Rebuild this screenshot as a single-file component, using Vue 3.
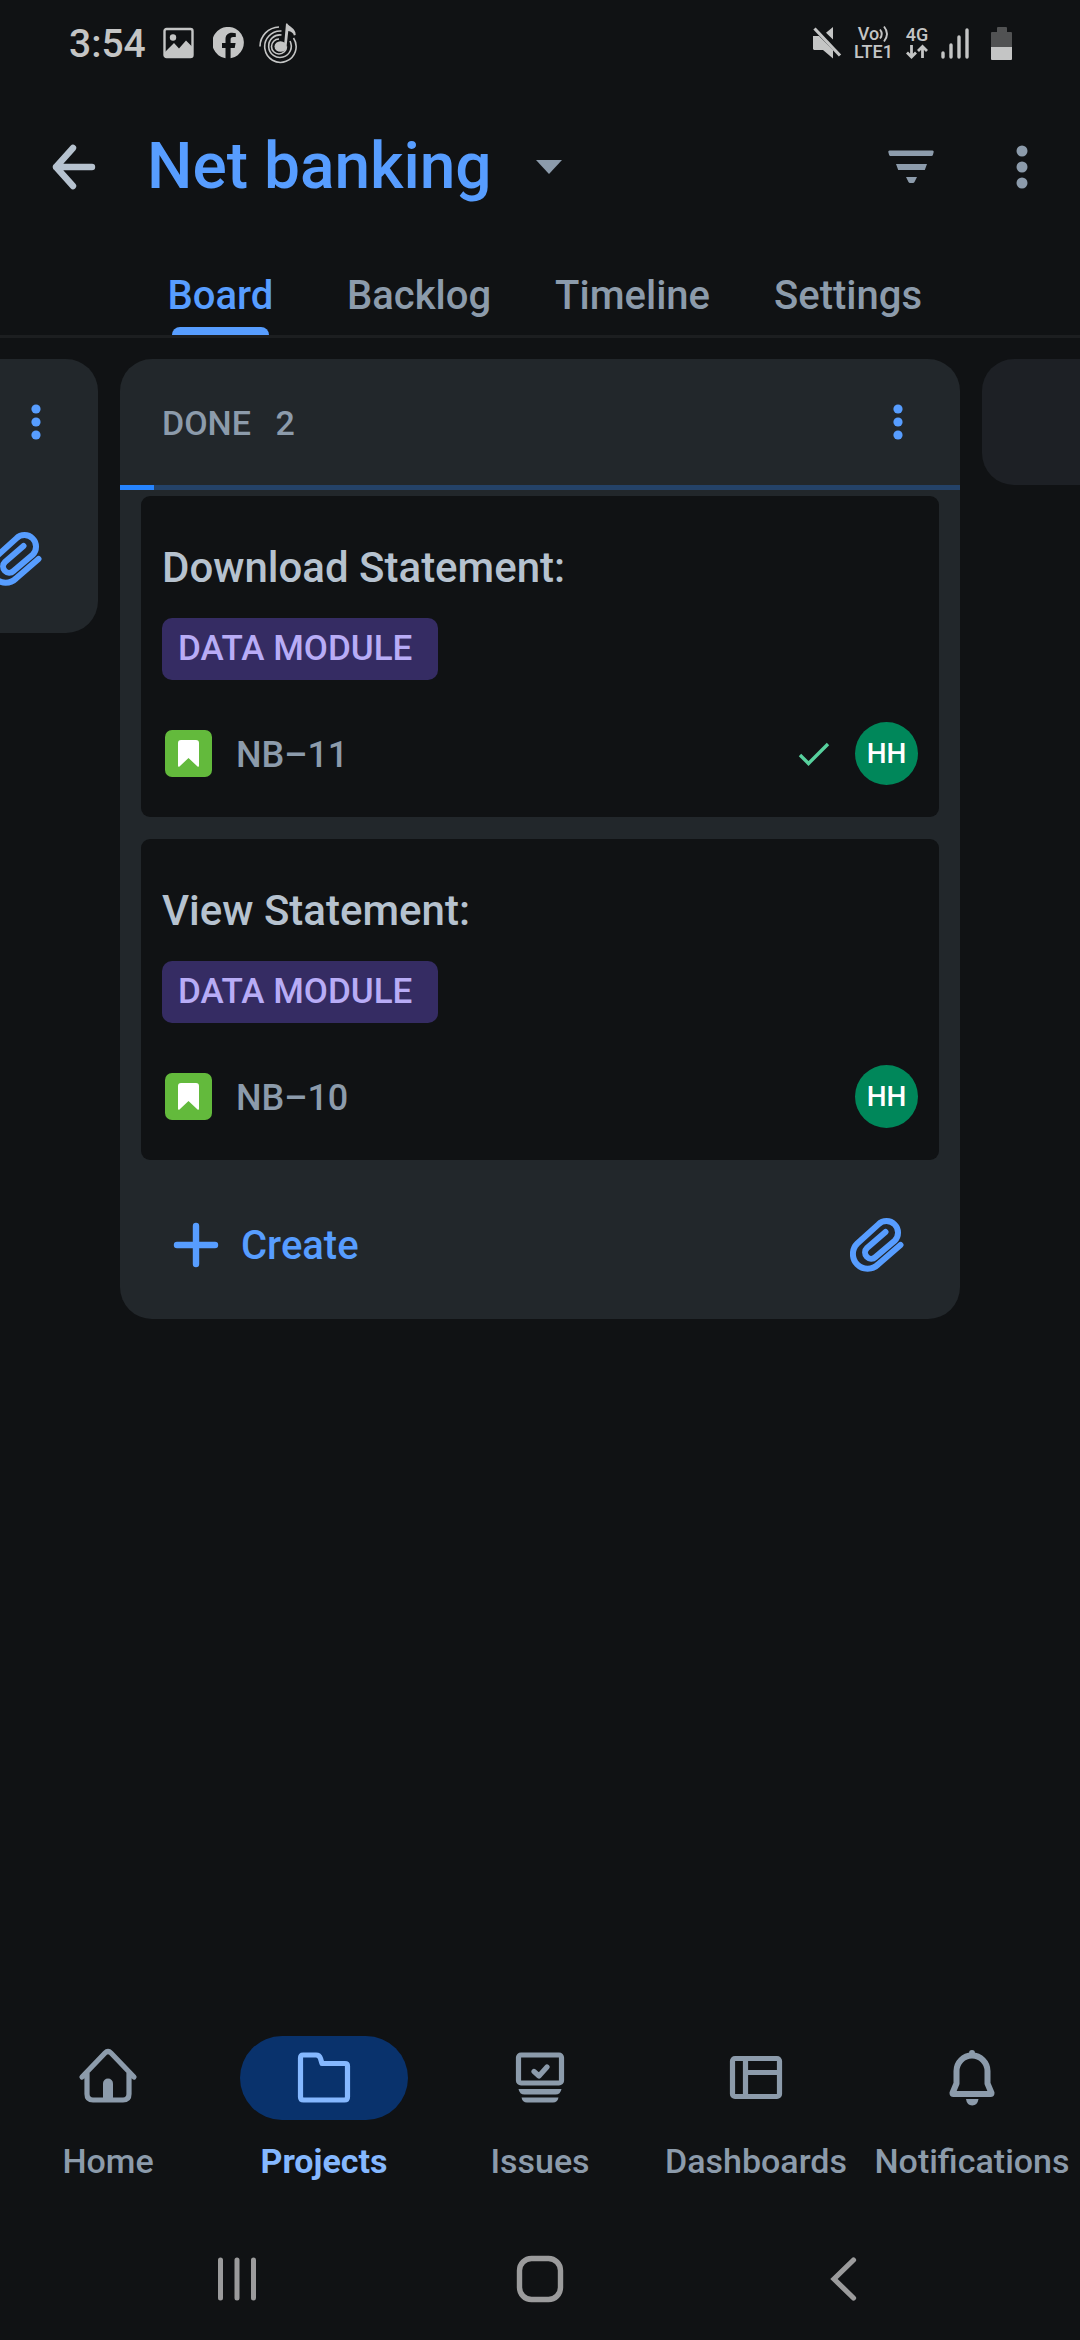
<script setup>
import { ref } from 'vue'

const tabs = ['Board', 'Backlog', 'Timeline', 'Settings']
const activeTab = ref('Board')

const issues = [
  { title: 'Download Statement:', epic: 'DATA MODULE', key: 'NB–11', done: true, assignee: 'HH' },
  { title: 'View Statement:', epic: 'DATA MODULE', key: 'NB–10', done: false, assignee: 'HH' },
]

const destinations = ['Home', 'Projects', 'Issues', 'Dashboards', 'Notifications']
const activeDestination = ref('Projects')
</script>

<template>
  <div class="screen">
    <div class="status-bar">
      <div class="status-group">
        <span class="clock">3:54</span>
        <svg width="32" height="32" viewBox="0 0 32 32" aria-hidden="true">
          <rect x="1.5" y="2" width="28" height="28" rx="2" fill="none" stroke="#c4c5c5" stroke-width="2.4" />
          <circle cx="10" cy="10.500" r="3.200" fill="#c4c5c5" />
          <path d="M2 25l9-9 5 5.500 7-8 7 7V29H2z" fill="#c4c5c5" />
        </svg>
        <svg class="gap-wide" width="32" height="32" viewBox="0 0 32 32" aria-hidden="true">
          <path d="M12.500 31.300V21H9v-5h3.500v-3.500c0-4.500 2.500-6.700 6.500-6.700 1.500 0 2.800.200 3.800.400V10h-2.600c-2 0-2.600 1.100-2.600 2.700V16h5l-.9 5h-4.100v10.300A15.800 15.800 0 1 0 12.500 31.300z" fill="#c4c5c5" />
        </svg>
        <svg class="gap-disc" width="38" height="42" viewBox="0 0 38 42" aria-hidden="true">
          <g fill="none" stroke="#c4c5c5" stroke-width="1.600">
            <path d="M1 24.500A19.500 19.500 0 0 1 20 5" />
            <path d="M22.500 9A15.700 15.700 0 1 0 34.500 16" />
            <path d="M22.500 13A11.300 11.300 0 1 0 31 19" />
            <path d="M20 17A7.500 7.500 0 1 0 27.500 24.500" />
          </g>
          <ellipse cx="21.500" cy="24.500" rx="6" ry="5.300" fill="#c4c5c5" />
          <path d="M28.300 1.500c1 3 8.700 4.500 8.400 11.500l-1.800.5c-.4-2.500-2.900-4-5.600-4.400L27.500 25l-2.500-1 2-22.500z" fill="#c4c5c5" />
        </svg>
      </div>
      <div class="status-group status-right">
        <svg width="30" height="34" viewBox="0 0 30 34" aria-hidden="true">
          <path d="M21 1v12.500L14 6.700zM1 10h6l14 14v8.500L11 24H2l-1-1z" fill="#c4c5c5" />
          <path d="M2.500 2.500l25.500 27" stroke="#c4c5c5" stroke-width="3.200" />
        </svg>
        <div class="network">
          <span class="volte">Vo<svg width="10" height="18" viewBox="0 0 10 18" aria-hidden="true">
            <path d="M1 4.500q3.500 4.500 0 9M5 1.500q6 7.500 0 15" fill="none" stroke="#c4c5c5" stroke-width="1.900" />
          </svg></span>
          <span>LTE1</span>
        </div>
        <div class="network">
          <span>4G</span>
          <svg width="24" height="16" viewBox="0 0 24 16" aria-hidden="true">
            <path d="M6.500 1v12M2 8.500l4.500 4.500L11 8.500M17.500 14V2M13 7l4.500-4.500L22 7" fill="none" stroke="#c4c5c5" stroke-width="2.800" />
          </svg>
        </div>
        <svg width="28" height="34" viewBox="0 0 28 34" aria-hidden="true">
          <path d="M2 27v4M10 19v12M18 11v20M26 4v27" stroke="#c4c5c5" stroke-width="3.400" stroke-linecap="round" />
        </svg>
        <svg class="gap-battery" width="22" height="34" viewBox="0 0 22 34" aria-hidden="true">
          <path d="M6 6V2q0-1 1-1h8q1 0 1 1v4h4q1 0 1 1v14H0V7q0-1 1-1z" fill="#515253" />
          <path d="M0 21h21v12q0 1-1 1H1q-1 0-1-1z" fill="#c4c5c5" />
        </svg>
      </div>
    </div>

    <header class="app-bar">
      <button class="icon-button" aria-label="Back">
        <svg width="46" height="48" viewBox="0 0 46 48">
          <path d="M22 5L5 24l17 19M5 24h36" fill="none" stroke="#b6c2cf" stroke-width="6.400" stroke-linecap="round" stroke-linejoin="round" />
        </svg>
      </button>
      <h1>
        <button class="project-switch">
          Net banking
          <svg width="26" height="14" viewBox="0 0 26 14" aria-hidden="true"><path d="M0 0h26L13 14z" fill="#8c9bab" /></svg>
        </button>
      </h1>
      <button class="icon-button" aria-label="Filter">
        <svg width="46" height="34" viewBox="0 0 46 34">
          <path d="M1.500.500h43q1.500 0 1.200 1.500l-.8 3q-.4 1-1.400 1h-41Q1.500 6 1.100 5L.3 2Q0 .500 1.500.500zM8 14h31l-2.200 6H10.200zM18 27h11l-2.500 5q-.5 1-1.500 1h-3q-1 0-1.500-1z" fill="#8c9bab" />
        </svg>
      </button>
      <button class="icon-button" aria-label="More options">
        <svg width="12" height="46" viewBox="0 0 12 46" fill="#8c9bab">
          <circle cx="6" cy="7" r="5.500" /><circle cx="6" cy="23" r="5.500" /><circle cx="6" cy="39" r="5.500" />
        </svg>
      </button>
    </header>

    <nav class="tabs" aria-label="Project views">
      <button v-for="tab in tabs" :key="tab" class="tab" :class="{ active: tab === activeTab }" @click="activeTab = tab">
        <span>{{ tab }}</span>
      </button>
    </nav>

    <main class="board">
      <section class="column">
        <div class="column-head">
          <button class="icon-button column-menu" aria-label="Column options">
            <svg width="10" height="36" viewBox="0 0 10 36" fill="#579dff">
              <circle cx="5" cy="5" r="4.600" /><circle cx="5" cy="18" r="4.600" /><circle cx="5" cy="31" r="4.600" />
            </svg>
          </button>
        </div>
        <div class="column-foot">
          <button class="icon-button attach" aria-label="Attach">
            <svg width="54" height="54" viewBox="10 10 54 54">
              <path d="M60.500 37L38 56.500A14.500 14.500 0 0 1 17.300 35.500L38.400 16.400A11.500 11.500 0 0 1 54.600 32.800L35.500 49A6 6 0 0 1 27 40L45.500 24" fill="none" stroke="#579dff" stroke-width="6" stroke-linecap="round" />
            </svg>
          </button>
        </div>
      </section>

      <section class="column">
        <div class="column-head">
          <h2>DONE <span>2</span></h2>
          <button class="icon-button column-menu" aria-label="Column options">
            <svg width="10" height="36" viewBox="0 0 10 36" fill="#579dff">
              <circle cx="5" cy="5" r="4.600" /><circle cx="5" cy="18" r="4.600" /><circle cx="5" cy="31" r="4.600" />
            </svg>
          </button>
        </div>
        <div class="loading"><div class="loading-value"></div></div>
        <div class="cards">
          <article v-for="issue in issues" :key="issue.key" class="card">
            <h3>{{ issue.title }}</h3>
            <span class="epic">{{ issue.epic }}</span>
            <div class="card-foot">
              <svg class="story" width="47" height="47" viewBox="0 0 47 47" aria-hidden="true">
                <rect width="47" height="47" rx="7" fill="#63ba3c" />
                <path d="M16 10h15q3 0 3 3v22.500q0 2-1.500 1L23.500 28l-9 8.500Q13 37.500 13 35.500V13q0-3 3-3z" fill="#fff" />
              </svg>
              <span class="key">{{ issue.key }}</span>
              <svg v-if="issue.done" class="check" width="32" height="24" viewBox="0 0 32 24" aria-label="Done">
                <path d="M2 13l8.500 8.500L30 2" fill="none" stroke="#57d09d" stroke-width="3.400" />
              </svg>
              <span class="avatar">{{ issue.assignee }}</span>
            </div>
          </article>
        </div>
        <div class="column-foot">
          <button class="create">
            <svg width="46" height="46" viewBox="0 0 46 46" aria-hidden="true">
              <path d="M23 4v38M4 23h38" stroke="#579dff" stroke-width="6.400" stroke-linecap="round" />
            </svg>
            <span>Create</span>
          </button>
          <button class="icon-button attach" aria-label="Attach">
            <svg width="54" height="54" viewBox="10 10 54 54">
              <path d="M60.500 37L38 56.500A14.500 14.500 0 0 1 17.300 35.500L38.400 16.400A11.500 11.500 0 0 1 54.600 32.800L35.500 49A6 6 0 0 1 27 40L45.500 24" fill="none" stroke="#579dff" stroke-width="6" stroke-linecap="round" />
            </svg>
          </button>
        </div>
      </section>

      <section class="column column-next"></section>
    </main>

    <nav class="bottom-nav" aria-label="Main">
      <a v-for="name in destinations" :key="name" href="#" class="destination" :class="{ active: name === activeDestination }" @click.prevent="activeDestination = name">
        <span class="pill">
          <svg width="64" height="64" viewBox="0 0 64 64" fill="none" stroke="currentColor" stroke-width="5.200" stroke-linecap="round" stroke-linejoin="round" aria-hidden="true">
            <template v-if="name === 'Home'">
              <path d="M6 31L29 7q3-3 6 0l23 24M11 27v21q0 6 6 6h30q6 0 6-6V27" />
              <path d="M27 53V37.500a5 5 0 0 1 10 0V53z" fill="currentColor" stroke="none" />
            </template>
            <path v-else-if="name === 'Projects'" d="M11 9h13q3.500 0 4.500 3.500l1.500 5h23q2.500 0 2.500 2.500v31q0 3-3 3h-41q-3 0-3-3V12q0-3 2.500-3z" />
            <template v-else-if="name === 'Issues'">
              <rect x="10.500" y="9" width="43" height="28" rx="2.500" />
              <path d="M26 25.500l5 4.500 8-9" />
              <path d="M10.500 43h43q-1 5.500-6 5.500h-31q-5 0-6-5.500zM13.500 51.500h37q-1 5-5.500 5H19q-4.500 0-5.500-5z" fill="currentColor" stroke="none" />
            </template>
            <template v-else-if="name === 'Dashboards'">
              <rect x="8.500" y="12.500" width="47" height="38" rx="2.500" />
              <path d="M21.500 13v37M22 26.500h33" />
            </template>
            <template v-else>
              <path d="M12.500 47l4-9.500V25a15.500 15.500 0 0 1 31 0v12.500l4 9.500q0 1-1 1h-37q-1 0-1-1zM32 7v2" stroke-width="6" />
              <path d="M26 53h12.500q-1 6.500-6.300 6.500T26 53z" fill="currentColor" stroke="none" />
            </template>
          </svg>
        </span>
        {{ name }}
      </a>
    </nav>

    <div class="system-nav">
      <button class="icon-button" aria-label="Recents">
        <svg width="44" height="50" viewBox="0 0 44 50"><path d="M5.500 6v38M22 6v38M38.500 6v38" stroke="#9b9b9c" stroke-width="5" stroke-linecap="round" /></svg>
      </button>
      <button class="icon-button" aria-label="Home screen">
        <svg width="50" height="50" viewBox="0 0 50 50"><rect x="4.500" y="4.500" width="41" height="41" rx="12" fill="none" stroke="#9b9b9c" stroke-width="5.400" /></svg>
      </button>
      <button class="icon-button" aria-label="System back">
        <svg width="30" height="50" viewBox="0 0 30 50"><path d="M25.500 6L6 25l19.500 19" fill="none" stroke="#9b9b9c" stroke-width="5.200" stroke-linecap="round" /></svg>
      </button>
    </div>
  </div>
</template>

<style>
body {
  margin: 0;
  background: #101214;
}
</style>

<style scoped>
.screen {
  box-sizing: border-box;
  min-height: 100vh;
  display: flex;
  flex-direction: column;
  overflow: hidden;
  background: #101214;
  color: #8c9bab;
  font-family: Roboto, "Noto Sans", sans-serif;
  font-weight: 500;
}

svg {
  display: block;
  flex: none;
}

button {
  padding: 0;
  border: 0;
  background: none;
  color: inherit;
  font: inherit;
  cursor: pointer;
}

h1,
h2,
h3 {
  margin: 0;
  font-weight: 500;
}

.icon-button {
  display: flex;
  align-items: center;
  justify-content: center;
}

/* Status bar */
.status-bar {
  display: flex;
  justify-content: space-between;
  align-items: center;
  height: 86px;
  padding: 0 67px 0 69px;
  color: #c4c5c5;
}

.status-group {
  display: flex;
  align-items: center;
}

.clock {
  margin-right: 17px;
  padding-top: 2px;
  font-size: 39px;
  line-height: 48px;
}

.gap-wide {
  margin-left: 18px;
}

.gap-disc {
  margin-left: 14px;
}

.status-right {
  gap: 12px;
}

.gap-battery {
  margin-left: 10px;
}

.network {
  display: flex;
  flex-direction: column;
  align-items: center;
  font-size: 18px;
  line-height: 18px;
}

.volte {
  display: flex;
  align-items: center;
}

/* App bar */
.app-bar {
  display: flex;
  align-items: center;
  height: 162px;
  padding: 0 52px 0 51px;
}

.app-bar h1 {
  flex: 1;
  margin-left: 50px;
}

.app-bar .icon-button + .icon-button {
  margin-left: 82px;
}

.project-switch {
  display: flex;
  align-items: center;
  gap: 44px;
  color: #579dff;
  font-size: 64px;
  line-height: 76px;
}

/* Tabs */
.tabs {
  display: flex;
  justify-content: center;
  height: 87px;
  border-bottom: 3px solid #1c1e20;
}

.tab {
  display: flex;
  min-width: 189px;
  padding: 0 32px;
  justify-content: center;
  font-size: 40px;
  line-height: 96px;
}

.tab span {
  position: relative;
  height: 87px;
}

.tab.active {
  color: #579dff;
}

.tab.active span::after {
  content: "";
  position: absolute;
  right: 4px;
  bottom: 0;
  left: 4px;
  height: 8px;
  border-radius: 8px 8px 0 0;
  background: #579dff;
}

/* Board */
.board {
  flex: 1;
  display: flex;
  justify-content: center;
  align-items: flex-start;
  gap: 22px;
  padding: 21px 0;
}

.column {
  flex: none;
  width: calc(100% - 240px);
  border-radius: 32px;
  background: #22272b;
}

.column-next {
  height: 126px;
  background: #1d2025;
}

.column-head {
  display: flex;
  align-items: center;
  height: 126px;
  padding: 0 57px 0 42px;
}

.column-head h2 {
  padding-top: 2px;
  font-size: 34px;
  line-height: 40px;
}

.column-head h2 span {
  margin-left: 16px;
}

.column-menu {
  margin-left: auto;
}

.loading {
  height: 5px;
  background: #244268;
}

.loading-value {
  width: 4%;
  height: 100%;
  background: #2684ff;
}

.cards {
  display: flex;
  flex-direction: column;
  gap: 22px;
  padding: 6px 21px 11px;
}

.card {
  padding: 48px 21px 32px;
  border-radius: 9px;
  background: #101214;
}

.card h3 {
  color: #b6c2cf;
  font-size: 42px;
  line-height: 48px;
}

.epic {
  display: table;
  margin-top: 26px;
  padding: 0 26px 0 16px;
  border-radius: 10px;
  background: #352c63;
  color: #b8acf6;
  font-size: 35px;
  line-height: 62px;
}

.card-foot {
  display: flex;
  align-items: center;
  margin-top: 42px;
}

.story {
  margin-left: 3px;
}

.key {
  margin-left: 24px;
  margin-right: auto;
  padding-top: 2px;
  font-size: 36px;
  line-height: 42px;
}

.check {
  margin-right: 25px;
}

.avatar {
  width: 63px;
  border-radius: 50%;
  background: #00875a;
  color: #fff;
  font-size: 28px;
  line-height: 63px;
  text-align: center;
}

.column-foot {
  display: flex;
  align-items: center;
  height: 148px;
  padding: 0 56px 0 53px;
}

.create {
  display: flex;
  align-items: center;
  gap: 22px;
  color: #579dff;
  font-size: 40px;
  line-height: 48px;
}

.create span {
  padding-top: 2px;
}

.attach {
  margin-left: auto;
}

/* Bottom navigation */
.bottom-nav {
  display: flex;
  padding-bottom: 56px;
}

.destination {
  flex: 1 1 0;
  min-width: 0;
  display: flex;
  flex-direction: column;
  align-items: center;
  gap: 21px;
  color: #8c9bab;
  font-size: 34px;
  line-height: 40px;
  text-decoration: none;
  white-space: nowrap;
}

.pill {
  display: flex;
  align-items: center;
  justify-content: center;
  width: 168px;
  height: 84px;
  border-radius: 42px;
}

.destination.active {
  color: #85b8ff;
  font-weight: 700;
}

.destination.active .pill {
  background: #09326c;
}

.system-nav {
  display: flex;
  align-items: center;
  height: 84px;
  padding: 0 86px 19px;
}

.system-nav .icon-button {
  flex: 1;
}
</style>
